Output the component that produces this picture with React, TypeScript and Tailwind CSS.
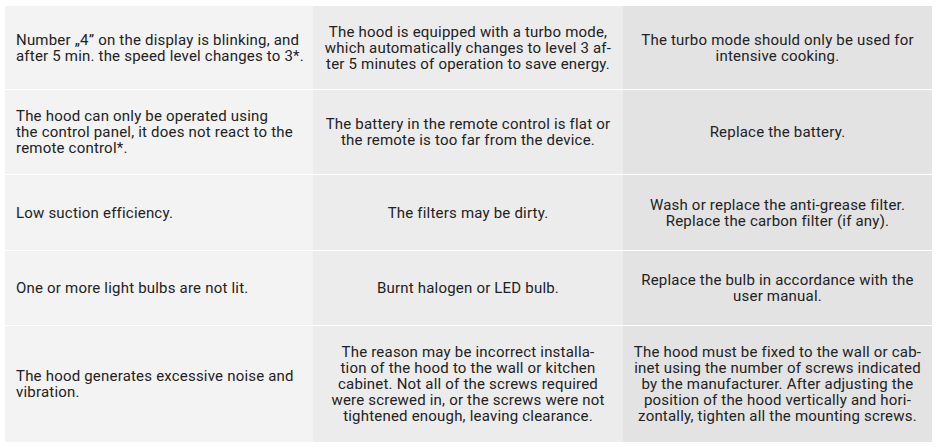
import * as React from "react";

type Row = {
  height: string;
  symptom: string[];
  cause: string[];
  remedy: string[];
};

const rows: Row[] = [
  {
    height: "h-[83px]",
    symptom: [
      "Number \u201E4\u201D on the display is blinking, and",
      "after 5 min. the speed level changes to 3*.",
    ],
    cause: [
      "The hood is equipped with a turbo mode,",
      "which automatically changes to level 3 af-",
      "ter 5 minutes of operation to save energy.",
    ],
    remedy: ["The turbo mode should only be used for", "intensive cooking."],
  },
  {
    height: "h-[84px]",
    symptom: [
      "The hood can only be operated using",
      "the control panel, it does not react to the",
      "remote control*.",
    ],
    cause: [
      "The battery in the remote control is flat or",
      "the remote is too far from the device.",
    ],
    remedy: ["Replace the battery."],
  },
  {
    height: "h-[75px]",
    symptom: ["Low suction efficiency."],
    cause: ["The filters may be dirty."],
    remedy: [
      "Wash or replace the anti-grease filter.",
      "Replace the carbon filter (if any).",
    ],
  },
  {
    height: "h-[74px]",
    symptom: ["One or more light bulbs are not lit."],
    cause: ["Burnt halogen or LED bulb."],
    remedy: ["Replace the bulb in accordance with the", "user manual."],
  },
  {
    height: "h-[116px]",
    symptom: ["The hood generates excessive noise and", "vibration."],
    cause: [
      "The reason may be incorrect installa-",
      "tion of the hood to the wall or kitchen",
      "cabinet. Not all of the screws required",
      "were screwed in, or the screws were not",
      "tightened enough, leaving clearance.",
    ],
    remedy: [
      "The hood must be fixed to the wall or cab-",
      "inet using the number of screws indicated",
      "by the manufacturer. After adjusting the",
      "position of the hood vertically and hori-",
      "zontally, tighten all the mounting screws.",
    ],
  },
];

// one text node per cell, lines split with <br />
function Lines({ lines }: { lines: string[] }) {
  return (
    <p className="whitespace-nowrap">
      {lines.map((line, i) => (
        <React.Fragment key={i}>
          {i > 0 && <br />}
          {line}
        </React.Fragment>
      ))}
    </p>
  );
}

export default function App() {
  return (
    <div
      className="h-[447px] w-[937px] bg-white pl-[5px] pt-[6px] text-[15px] leading-[16px] tracking-[0.2px] text-[#222]"
      style={{ fontFamily: "Roboto, 'Noto Sans', sans-serif" }}
    >
      <div className="flex flex-col gap-px">
        {rows.map((row, i) => (
          <div key={i} className={`flex ${row.height}`}>
            <div className="flex w-[308px] items-center bg-[#f3f3f3] pl-[11px]">
              <Lines lines={row.symptom} />
            </div>
            <div className="flex w-[310px] items-center justify-center bg-[#ececec] text-center">
              <Lines lines={row.cause} />
            </div>
            <div className="flex w-[309px] items-center justify-center bg-[#e3e3e3] text-center">
              <Lines lines={row.remedy} />
            </div>
          </div>
        ))}
      </div>
    </div>
  );
}
